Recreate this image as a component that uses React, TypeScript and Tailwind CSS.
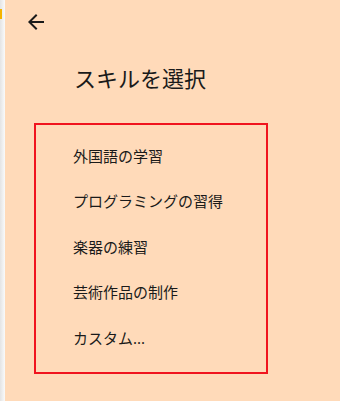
const SKILLS = ["外国語の学習", "プログラミングの習得", "楽器の練習", "芸術作品の制作", "カスタム..."];

export default function App() {
  return (
    <div
      className="flex h-[401px] w-[340px] overflow-hidden bg-[#ffdab9] text-[#1a1a1a]"
      style={{ fontFamily: '"Noto Sans", "Noto Sans CJK JP", sans-serif' }}
    >
      {/* window edge */}
      <div className="relative w-[5px] shrink-0 bg-gradient-to-r from-[#e4e4e4] to-[#fafafa]">
        <div className="absolute left-0 top-[9px] h-[10px] w-[2px] bg-[#f5b400]" />
      </div>

      <div className="flex flex-1 flex-col">
        <div className="pl-[19px] pt-[10px]">
          <svg width="24" height="24" viewBox="0 0 24 24" fill="#1a1a1a">
            <path d="M20 11H7.83l5.59-5.59L12 4l-8 8 8 8 1.41-1.41L7.83 13H20v-2z" />
          </svg>
        </div>

        <h1 className="mt-[29px] pl-[69px] text-[22px] leading-[30px]">スキルを選択</h1>

        <ul className="ml-[29px] mt-[30px] w-[234px] border-2 border-[#f0141e] pb-[11px] pt-[8px]">
          {SKILLS.map((s) => (
            <li key={s} className="flex h-[45.5px] items-center pl-[37px] text-[15px]">
              {s}
            </li>
          ))}
        </ul>
      </div>
    </div>
  );
}
